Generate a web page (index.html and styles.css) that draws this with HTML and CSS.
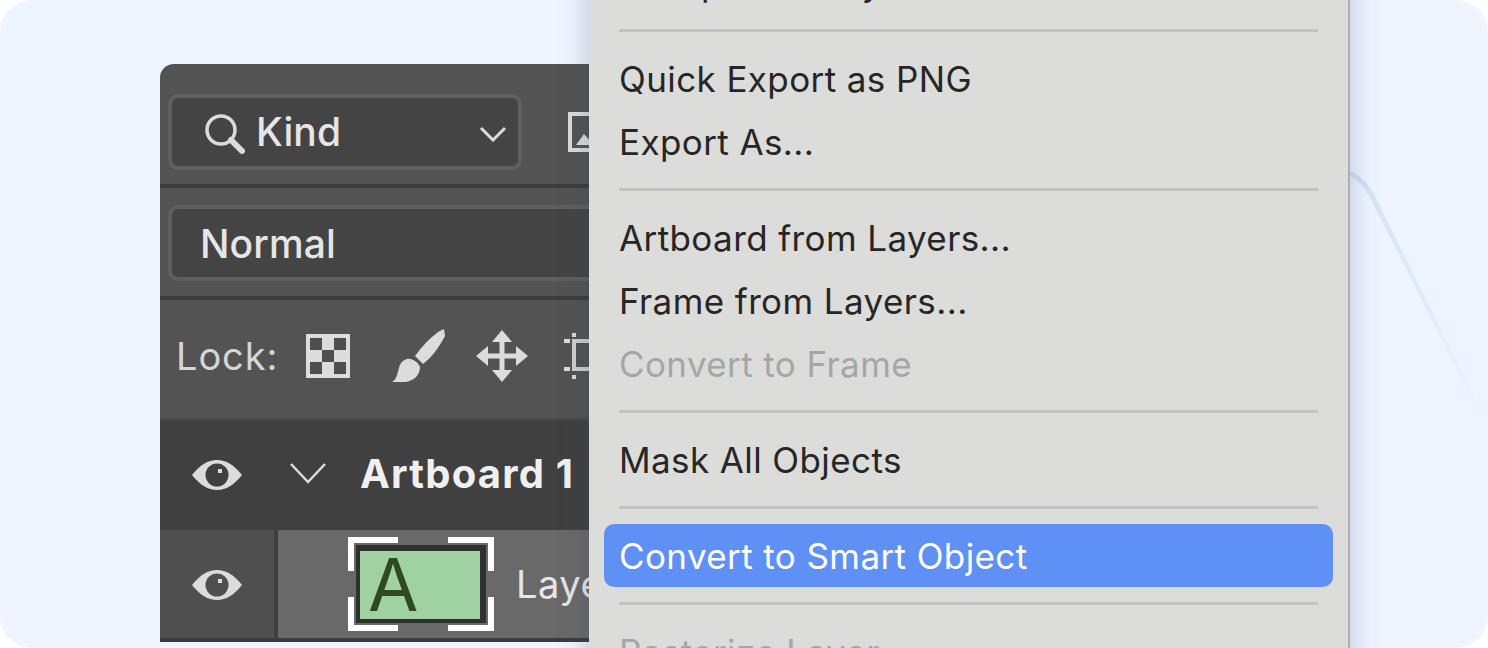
FILE: index.html
```html
<!DOCTYPE html>
<html>

<head>
  <title>Convert to Smart Object</title>
  <link rel="stylesheet" href="styles.css">
</head>

<body>
  <div class="stage">
    <svg class="bg-line" width="1488" height="648" viewBox="0 0 1488 648">
      <defs>
        <linearGradient id="lineFade" gradientUnits="userSpaceOnUse" x1="1348" y1="172" x2="1488" y2="430">
          <stop offset="0" stop-color="#d3e2f9" />
          <stop offset="1" stop-color="#eef5ff" />
        </linearGradient>
      </defs>
      <path d="M1340 172 C1354 172 1364 182 1371 194 L1490 432" fill="none" stroke="url(#lineFade)" stroke-width="5" />
    </svg>

    <div class="panel">
      <div class="panel-row filter-row">
        <div class="select kind-select">
          <svg class="icon-search" width="44" height="44" viewBox="0 0 44 44">
            <circle cx="18" cy="18" r="14" fill="none" stroke="#dcdcdc" stroke-width="3.5" />
            <path d="M28 28 L39 39" stroke="#dcdcdc" stroke-width="6" stroke-linecap="round" />
          </svg>
          <span class="select-label kind-label">Kind</span>
          <svg class="icon-chevron" width="28" height="16" viewBox="0 0 28 16">
            <path d="M2 2 L14 14 L26 2" fill="none" stroke="#dcdcdc" stroke-width="3" />
          </svg>
        </div>
        <svg class="icon-image" width="40" height="40" viewBox="0 0 40 40">
          <rect x="2" y="2" width="36" height="36" fill="none" stroke="#dcdcdc" stroke-width="4" />
          <path d="M8 33 L16 22 L26 33 Z" fill="#dcdcdc" />
        </svg>
      </div>
      <div class="panel-row blend-row">
        <div class="select blend-select"><span class="select-label">Normal</span></div>
      </div>
      <div class="panel-row lock-row">
        <span class="lock-label">Lock:</span>
        <svg class="lock-icon icon-checker" width="44" height="44" viewBox="0 0 44 44">
          <rect width="44" height="44" fill="#dcdcdc" />
          <path d="M4 4 H16 V16 H4 Z M28 4 H40 V16 H28 Z M16 16 H28 V28 H16 Z M4 28 H16 V40 H4 Z M28 28 H40 V40 H28 Z" fill="#4f4f4f" />
        </svg>
        <svg class="lock-icon icon-brush" width="54" height="54" viewBox="0 0 54 54">
          <path d="M52 0 L53 7 C46 20 39 29 31 35 L23 27 C30 17 38 9 46 3 Z" fill="#dcdcdc" />
          <path d="M15 30 C20 29 26 33 28 38 C28 46 22 52 13 53 L0 53 C5 50 5 45 7 39 C8 34 11 31 15 30 Z" fill="#dcdcdc" />
        </svg>
        <svg class="lock-icon icon-move" width="52" height="52" viewBox="0 0 52 52">
          <path d="M26 0 L36 12 H16 Z M26 52 L36 40 H16 Z M0 26 L12 16 V36 Z M52 26 L40 16 V36 Z" fill="#dcdcdc" />
          <path d="M26 10 V42 M10 26 H42" stroke="#dcdcdc" stroke-width="5" />
        </svg>
        <svg class="lock-icon icon-artboard" width="26" height="46" viewBox="0 0 26 46">
          <path d="M10 8 H26 M10 36 H26 M10 6 V38" fill="none" stroke="#cfcfcf" stroke-width="4" />
          <path d="M8 0 H12 V4 H8 Z M0 6 H6 V10 H0 Z M0 34 H6 V38 H0 Z M8 42 H12 V46 H8 Z" fill="#dcdcdc" />
        </svg>
      </div>
      <div class="layer-row artboard-row">
        <div class="eye-cell">
          <svg class="icon-eye" width="50" height="30" viewBox="0 0 50 30">
            <path d="M0 15 C8 5 16 0 25 0 C34 0 42 5 50 15 C42 25 34 30 25 30 C16 30 8 25 0 15 Z" fill="#dcdcdc" />
            <circle cx="25" cy="15" r="11.5" fill="#404040" />
            <rect x="26" y="9" width="4" height="4" fill="#dcdcdc" />
          </svg>
        </div>
        <svg class="icon-twirl" width="36" height="22" viewBox="0 0 36 22">
          <path d="M1 2 L18 20 L35 2" fill="none" stroke="#dcdcdc" stroke-width="2.5" />
        </svg>
        <span class="artboard-name">Artboard 1</span>
      </div>
      <div class="layer-row text-layer-row">
        <div class="eye-cell">
          <svg class="icon-eye" width="50" height="30" viewBox="0 0 50 30">
            <path d="M0 15 C8 5 16 0 25 0 C34 0 42 5 50 15 C42 25 34 30 25 30 C16 30 8 25 0 15 Z" fill="#dcdcdc" />
            <circle cx="25" cy="15" r="11.5" fill="#4f4f4f" />
            <rect x="26" y="9" width="4" height="4" fill="#dcdcdc" />
          </svg>
        </div>
        <div class="layer-body">
          <div class="thumb">
            <div class="thumb-inner">A</div>
            <span class="handle handle-tl"></span>
            <span class="handle handle-tr"></span>
            <span class="handle handle-bl"></span>
            <span class="handle handle-br"></span>
          </div>
          <span class="layer-name">Layer 1</span>
        </div>
      </div>
    </div>

    <div class="menu">
      <div class="menu-item">Group from Layers...</div>
      <div class="menu-sep"></div>
      <div class="menu-item">Quick Export as PNG</div>
      <div class="menu-item">Export As...</div>
      <div class="menu-sep"></div>
      <div class="menu-item">Artboard from Layers...</div>
      <div class="menu-item">Frame from Layers...</div>
      <div class="menu-item disabled">Convert to Frame</div>
      <div class="menu-sep"></div>
      <div class="menu-item">Mask All Objects</div>
      <div class="menu-sep"></div>
      <div class="menu-item active">Convert to Smart Object</div>
      <div class="menu-sep"></div>
      <div class="menu-item disabled">Rasterize Layer</div>
    </div>
  </div>
</body>

</html>
```

FILE: styles.css
```css
body {
  margin: 0;
  background-color: #fff;
  font-family: Inter, 'Noto Sans', sans-serif;
}

.stage {
  position: relative;
  width: 1488px;
  height: 648px;
  overflow: hidden;
  border-radius: 32px;
  background-color: #eef5ff;
  padding: 64px 0 0 160px;
  box-sizing: border-box;
}

.bg-line {
  position: absolute;
  top: 0;
  left: 0;
}

/* Layers panel */
.panel {
  position: relative;
  width: 440px;
  border-radius: 14px 0 0 0;
  overflow: hidden;
  background-color: #535353;
  color: #e6e6e6;
}

.panel-row {
  display: flex;
  align-items: center;
  box-sizing: border-box;
  border-bottom: 4px solid #3c3c3c;
  padding-left: 8px;
}

.filter-row {
  height: 124px;
  padding-top: 16px;
}

.blend-row {
  height: 112px;
  padding-top: 2px;
}

.lock-row {
  height: 118px;
  border-bottom: 0;
  padding-left: 16px;
  padding-bottom: 6px;
}

.select {
  display: flex;
  align-items: center;
  flex-shrink: 0;
  box-sizing: border-box;
  height: 76px;
  border: 4px solid #5f5f5f;
  border-radius: 10px;
  background-color: #444;
}

.kind-select {
  width: 354px;
  padding-left: 31px;
}

.blend-select {
  width: 500px;
  padding-left: 28px;
}

.select-label {
  font-size: 39px;
  font-weight: 500;
  letter-spacing: 0.1px;
}

.kind-label {
  margin-bottom: 2px;
}

.icon-search {
  margin-right: 9px;
  margin-top: 4px;
}

.icon-chevron {
  margin-left: auto;
  margin-right: 11px;
  margin-top: 4px;
}

.icon-image {
  margin-left: 46px;
  flex-shrink: 0;
}

.lock-label {
  font-size: 38px;
  letter-spacing: 0.9px;
  color: #d6d6d6;
  width: 130px;
  flex-shrink: 0;
}

.lock-icon {
  flex-shrink: 0;
}

.icon-brush {
  margin-left: 42px;
}

.icon-move {
  margin-left: 30px;
}

.icon-artboard {
  margin-left: 36px;
}

.layer-row {
  display: flex;
  align-items: center;
}

.artboard-row {
  height: 112px;
  background-color: #404040;
  border-top: 2px solid #4a4a4a;
  box-sizing: border-box;
}

.eye-cell {
  display: flex;
  align-items: center;
  justify-content: center;
  box-sizing: border-box;
  width: 114px;
  flex-shrink: 0;
}

.icon-twirl {
  margin-left: 16px;
  margin-bottom: 4px;
}

.artboard-name {
  margin-left: 34px;
  margin-bottom: 4px;
  font-size: 40px;
  letter-spacing: 1.2px;
  font-weight: 700;
  color: #f0f0f0;
  white-space: nowrap;
}

.text-layer-row {
  height: 112px;
  align-items: stretch;
  background-color: #3c3c3c;
  padding-bottom: 4px;
  box-sizing: border-box;
}

.text-layer-row .eye-cell {
  background-color: #4f4f4f;
  border-right: 4px solid #3f3f3f;
  width: 118px;
  padding-top: 2px;
}

.layer-body {
  flex: 1;
  display: flex;
  align-items: center;
  background-color: #696969;
  padding-left: 78px;
}

.thumb {
  position: relative;
  display: flex;
  box-sizing: border-box;
  width: 130px;
  height: 78px;
  flex-shrink: 0;
  padding: 6px 6px 4px 4px;
  background-color: #2f312e;
}

.thumb-inner {
  flex: 1;
  box-sizing: border-box;
  background-color: #a0d1a3;
  color: #2f4a22;
  font-size: 73px;
  font-weight: 400;
  line-height: 68px;
  padding-left: 8px;
}

.handle {
  position: absolute;
  width: 44px;
  height: 28px;
  border: 0 solid #fff;
}

.handle-tl {
  top: -8px;
  left: -8px;
  border-width: 6px 0 0 6px;
}

.handle-tr {
  top: -8px;
  right: -8px;
  width: 40px;
  border-width: 6px 6px 0 0;
}

.handle-bl {
  bottom: -8px;
  left: -8px;
  border-width: 0 0 6px 6px;
}

.handle-br {
  bottom: -8px;
  right: -8px;
  width: 40px;
  border-width: 0 6px 6px 0;
}

.layer-name {
  margin-left: 30px;
  font-size: 38px;
  letter-spacing: 0.5px;
  color: #e6e6e6;
  white-space: nowrap;
}

/* Context menu */
.menu {
  position: absolute;
  top: -49px;
  left: 589px;
  width: 761px;
  height: 760px;
  box-sizing: border-box;
  padding: 0 15px;
  background-color: #dcdcdb;
  border-right: 2px solid #a9aeb4;
  box-shadow: 0 0 28px rgba(50, 70, 110, 0.28);
}

.menu-item {
  height: 63px;
  line-height: 65px;
  padding-left: 15px;
  border-radius: 10px;
  font-size: 35px;
  letter-spacing: 0.4px;
  color: #262626;
  white-space: nowrap;
}

.menu-item.disabled {
  color: #a6a6a6;
}

.menu-item.active {
  background-color: #5e90f5;
  color: #fff;
}

.menu-sep {
  height: 3px;
  margin: 15px;
  background-color: #c3c3c2;
}
```
